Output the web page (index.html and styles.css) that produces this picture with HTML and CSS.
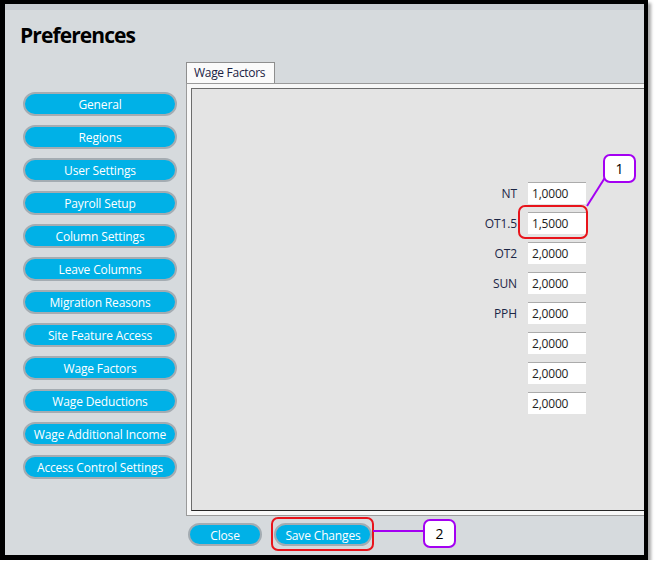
FILE: index.html
```html
<!DOCTYPE html>
<html>
<head>
    <title>Preferences</title>
    <link rel="stylesheet" href="styles.css">
</head>
<body>
    <div class="window">
        <div class="header">
            <h1>Preferences</h1>
        </div>

        <div class="main">
            <div class="sidebar">
                <button class="pill">General</button>
                <button class="pill">Regions</button>
                <button class="pill">User Settings</button>
                <button class="pill">Payroll Setup</button>
                <button class="pill">Column Settings</button>
                <button class="pill">Leave Columns</button>
                <button class="pill">Migration Reasons</button>
                <button class="pill">Site Feature Access</button>
                <button class="pill">Wage Factors</button>
                <button class="pill">Wage Deductions</button>
                <button class="pill">Wage Additional Income</button>
                <button class="pill">Access Control Settings</button>
            </div>

            <div class="tabs">
                <div class="tab-strip">
                    <div class="tab">Wage Factors</div>
                </div>
                <div class="tab-body">
                    <div class="tab-inner">
                        <div class="factors">
                            <label>NT</label><div class="field">1,0000</div>
                            <label>OT1.5</label><div class="field">1,5000</div>
                            <label>OT2</label><div class="field">2,0000</div>
                            <label>SUN</label><div class="field">2,0000</div>
                            <label>PPH</label><div class="field">2,0000</div>
                            <label></label><div class="field">2,0000</div>
                            <label></label><div class="field">2,0000</div>
                            <label></label><div class="field">2,0000</div>
                        </div>
                    </div>
                </div>
            </div>
        </div>

        <div class="footer">
            <button class="pill close">Close</button>
            <button class="pill save">Save Changes</button>
        </div>
    </div>

    <!-- numbered callouts -->
    <div class="mark mark-field"></div>
    <div class="mark mark-save"></div>
    <svg class="leaders" width="657" height="569">
        <line x1="587" y1="206" x2="606" y2="176" />
        <line x1="373" y1="531" x2="423" y2="531" />
    </svg>
    <div class="badge badge-1">1</div>
    <div class="badge badge-2">2</div>
</body>
</html>
```

FILE: styles.css
```css
body {
    margin: 0;
    background: #fff;
    font-family: "Open Sans", "Noto Sans", sans-serif;
}
.window {
    position: relative;
    width: 648px;
    height: 560px;
    box-sizing: border-box;
    border-style: solid;
    border-color: #000;
    border-width: 4px 4px 5px 5px;
    box-shadow: 3px 3px 3px rgba(0, 0, 0, 0.35);
    background: #d6dadd;
    overflow: hidden;
}
.header {
    height: 52px;
    border-top: 6px solid #c9cdd1;
    box-sizing: content-box;
}
h1 {
    margin: 0;
    padding: 12px 0 0 15px;
    font-size: 21px;
    line-height: 26px;
    font-weight: 700;
    letter-spacing: -0.9px;
    color: #000;
}
.main {
    display: flex;
    height: 454px;
}
.sidebar {
    width: 181px;
    flex-shrink: 0;
    display: flex;
    flex-direction: column;
    gap: 9px;
    padding: 30px 0 0 18px;
    box-sizing: border-box;
}
.pill {
    height: 24px;
    box-sizing: border-box;
    border: 2px solid #a4acb2;
    border-radius: 12px;
    background: #00b1e7;
    color: #fff;
    font-family: "Open Sans", "Noto Sans", sans-serif;
    font-size: 12px;
    letter-spacing: -0.15px;
    padding: 1px 0 0;
    text-align: center;
}
.sidebar .pill {
    width: 154px;
}
.tabs {
    flex: 1;
    display: flex;
    flex-direction: column;
}
.tab-strip {
    height: 21px;
    display: flex;
}
.tab {
    width: 89px;
    box-sizing: border-box;
    border: 1px solid #8e8e8e;
    border-bottom: none;
    background: #fafafa;
    color: #1a2244;
    font-size: 12px;
    letter-spacing: -0.3px;
    line-height: 20px;
    padding-left: 7px;
}
.tab-body {
    flex: 1;
    border: 1px solid #9a9a9a;
    border-right: none;
    background: #f8f8f8;
    padding: 4px 0 4px 4px;
    display: flex;
}
.tab-inner {
    flex: 1;
    border-top: 1px solid #6c6c6c;
    border-left: 1px solid #6c6c6c;
    border-bottom: 1px solid #262626;
    background: #e4e4e4;
}
.factors {
    display: grid;
    grid-template-columns: 60px 58px;
    grid-auto-rows: 22px;
    column-gap: 11px;
    row-gap: 8px;
    padding: 93px 0 0 265px;
}
.factors label {
    text-align: right;
    color: #1c2646;
    font-size: 12px;
    letter-spacing: -0.1px;
    line-height: 24px;
}
.field {
    background: #fff;
    border-top: 1px solid #ababab;
    color: #1e1e1e;
    font-size: 12px;
    letter-spacing: -0.2px;
    line-height: 21px;
    padding-left: 4px;
}
.footer {
    display: flex;
    gap: 12px;
    padding: 7px 0 0 183px;
}
.footer .pill {
    height: 23px;
}
.close {
    width: 74px;
}
.save {
    width: 98px;
}
.mark {
    position: absolute;
    border: 2px solid #e8141b;
    border-radius: 7px;
    box-sizing: border-box;
}
.mark-field {
    left: 518px;
    top: 205px;
    width: 70px;
    height: 34px;
}
.mark-save {
    left: 271px;
    top: 517px;
    width: 103px;
    height: 34px;
}
.leaders {
    position: absolute;
    left: 0;
    top: 0;
}
.leaders line {
    stroke: #a400f2;
    stroke-width: 2;
}
.badge {
    position: absolute;
    width: 33px;
    height: 29px;
    box-sizing: border-box;
    border: 2px solid #a400f2;
    border-radius: 7px;
    background: #fff;
    color: #000;
    font-size: 14px;
    line-height: 25px;
    text-align: center;
}
.badge-1 {
    left: 603px;
    top: 154px;
}
.badge-2 {
    left: 423px;
    top: 519px;
}
```
